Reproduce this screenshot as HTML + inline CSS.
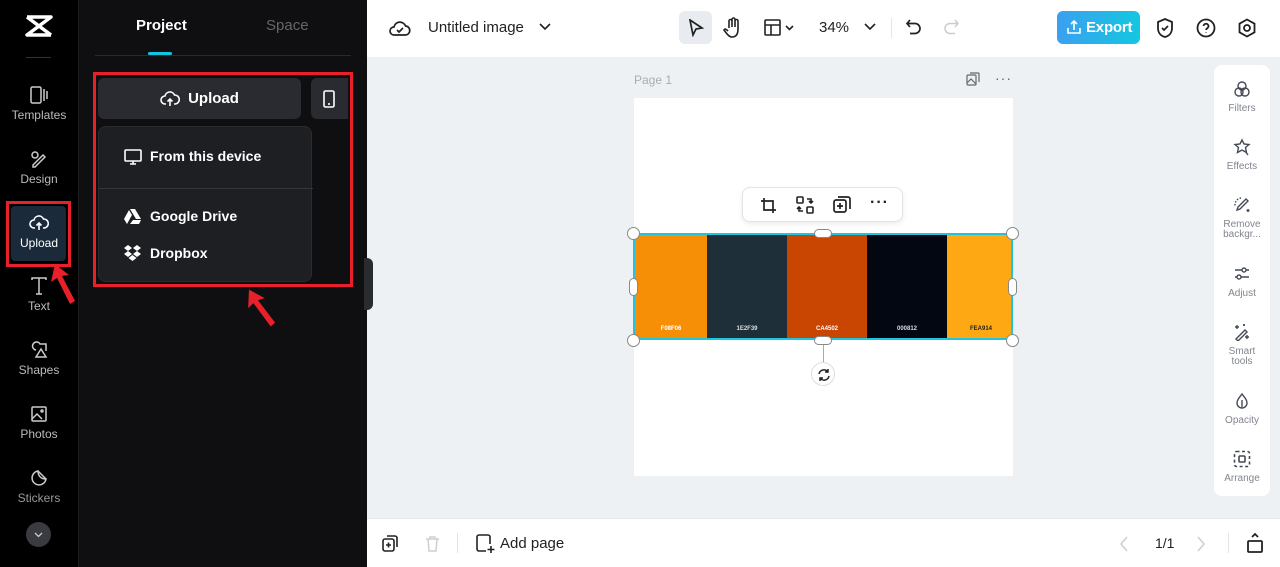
<!DOCTYPE html>
<html><head><meta charset="utf-8"><style>
*{box-sizing:border-box;margin:0;padding:0}
body{width:1280px;height:567px;overflow:hidden;font-family:"Liberation Sans",sans-serif;background:#eef1f4;position:relative}
.abs{position:absolute}
.nav{left:0;top:0;width:78px;height:567px;background:#000}
.nv{position:absolute;left:0;width:78px;text-align:center;color:#bbb;font-size:12px}
.nv svg{display:block;margin:0 auto 3px}
.panel{left:78px;top:0;width:289px;height:567px;background:#0f0f11;border-left:1px solid #1c1c1e}
.top{left:367px;top:0;width:913px;height:57px;background:#fff}
.bot{left:367px;top:518px;width:913px;height:49px;background:#fff;border-top:1px solid #e4e6ea}
.ri{position:absolute;left:0;width:56px;text-align:center;color:#80858f;font-size:10px;line-height:10px}
.ri svg{display:block;margin:0 auto 6px}
.sw{position:absolute;top:0;height:104px;font-size:6px;font-weight:bold;text-align:center;padding-top:91px}
.h{position:absolute;background:#fff;border:1px solid #888;border-radius:50%;width:13px;height:13px}
</style></head><body>
<div class="abs nav">
 <svg class="abs" style="left:24px;top:14px" width="30" height="24" viewBox="0 0 30 24"><path d="M3 3h24L3 21h24M3 3l24 18" stroke="#fff" stroke-width="3.5" fill="none" stroke-linejoin="round"/></svg>
 <div class="abs" style="left:26px;top:57px;width:25px;height:1px;background:#333"></div>
 <div class="nv" style="top:85px"><svg width="20" height="20" viewBox="0 0 20 20" fill="none" stroke="#ccc" stroke-width="1.5"><rect x="2" y="2" width="10" height="16" rx="1.5"/><path d="M15 4v12M18 6v8"/></svg>Templates</div>
 <div class="nv" style="top:149px"><svg width="20" height="20" viewBox="0 0 20 20" fill="none" stroke="#ccc" stroke-width="1.5"><circle cx="6" cy="6" r="3"/><path d="M4 16l10-10 2 2-10 10H4z"/></svg>Design</div>
 <div class="abs" style="left:6px;top:201px;width:65px;height:66px;border:3px solid #e8202a"></div>
 <div class="abs" style="left:11px;top:206px;width:55px;height:55px;background:#1a2a3a;border-radius:4px"></div>
 <div class="nv" style="top:213px;color:#fff"><svg width="20" height="20" viewBox="0 0 20 20" fill="none" stroke="#fff" stroke-width="1.6"><path d="M6 15H5a4 4 0 010-8 5 5 0 019.5-1A4 4 0 0115 15h-1M10 17V10M7.5 12.5L10 10l2.5 2.5"/></svg>Upload</div>
 <div class="nv" style="top:276px"><svg width="20" height="20" viewBox="0 0 20 20" fill="none" stroke="#ccc" stroke-width="1.5"><path d="M3 4V2h14v2M10 2v16M7 18h6"/></svg>Text</div>
 <div class="nv" style="top:340px"><svg width="20" height="20" viewBox="0 0 20 20" fill="none" stroke="#ccc" stroke-width="1.5"><path d="M7 10a4 4 0 114-6h6v7M12 9l5 8H7z"/></svg>Shapes</div>
 <div class="nv" style="top:404px"><svg width="20" height="20" viewBox="0 0 20 20" fill="none" stroke="#ccc" stroke-width="1.5"><rect x="3" y="3" width="14" height="14" rx="1"/><path d="M3 15l5-5 5 5"/><circle cx="13" cy="7" r="1"/></svg>Photos</div>
 <div class="nv" style="top:468px;color:#999"><svg width="20" height="20" viewBox="0 0 20 20" fill="none" stroke="#ccc" stroke-width="1.5"><path d="M17 11a7 7 0 11-8-8c0 5 3 8 8 8zM9 3l8 8"/></svg>Stickers</div>
 <div class="abs" style="left:26px;top:522px;width:25px;height:25px;border-radius:50%;background:#3a3b40"><svg width="25" height="25" viewBox="0 0 25 25"><path d="M9 11l3.5 3.5L16 11" stroke="#ccc" stroke-width="1.3" fill="none"/></svg></div>
 <svg class="abs" style="left:48px;top:262px" width="30" height="46"><path d="M7 2l-4 18 6-4 13 26 5-3-13-25 7-1z" fill="#e8202a"/></svg>
</div>
<div class="abs panel">
 <div class="abs" style="left:57px;top:17px;color:#fff;font-weight:bold;font-size:15px">Project</div>
 <div class="abs" style="left:187px;top:17px;color:#666;font-size:15px">Space</div>
 <div class="abs" style="left:16px;top:55px;width:256px;height:1px;background:#2a2a2d"></div>
 <div class="abs" style="left:69px;top:52px;width:24px;height:3px;background:#11c5e0;border-radius:2px"></div>
 <div class="abs" style="left:14px;top:72px;width:260px;height:215px;border:3px solid #e8202a"></div>
 <div class="abs" style="left:19px;top:78px;width:203px;height:41px;background:#2a2b30;border-radius:6px;color:#fff;font-weight:bold;font-size:15px;text-align:center;line-height:41px"><svg style="vertical-align:-4px;margin-right:8px" width="20" height="18" viewBox="0 0 20 18" fill="none" stroke="#fff" stroke-width="1.6"><path d="M6 15H5a4 4 0 010-8 5 5 0 019.5-1A4 4 0 0115 15h-1M10 17V10M7.5 12.5L10 10l2.5 2.5"/></svg>Upload</div>
 <div class="abs" style="left:232px;top:78px;width:37px;height:41px;background:#2a2b30;border-radius:6px 0 0 6px"><svg style="margin:12px 0 0 12px" width="12" height="18" viewBox="0 0 12 18" fill="none" stroke="#fff" stroke-width="1.6"><rect x="1" y="1" width="10" height="16" rx="1.5"/><path d="M5 14h2"/></svg></div>
 <div class="abs" style="left:19px;top:126px;width:214px;height:156px;background:#1e1f23;border:1px solid #2b2c30;border-radius:8px;color:#fff;font-weight:bold;font-size:14px">
  <div class="abs" style="left:25px;top:21px"><svg style="vertical-align:-4px;margin-right:8px" width="18" height="16" viewBox="0 0 18 16" fill="none" stroke="#fff" stroke-width="1.6"><rect x="1" y="1" width="16" height="11" rx="1"/><path d="M6 15h6M9 12v3"/></svg>From this device</div>
  <div class="abs" style="left:0;top:61px;width:214px;height:1px;background:#35363a"></div>
  <div class="abs" style="left:25px;top:81px"><svg style="vertical-align:-3px;margin-right:9px" width="17" height="15" viewBox="0 0 17 15" fill="#fff"><path d="M6 0h5l6 10h-5zM5 1l3 5-5 9-3-5zM6 15l3-4h8l-2 4z"/></svg>Google Drive</div>
  <div class="abs" style="left:25px;top:118px"><svg style="vertical-align:-3px;margin-right:9px" width="17" height="16" viewBox="0 0 17 16" fill="#fff"><path d="M4 0l4 3-4 3-4-3zM13 0l4 3-4 3-4-3zM4 6l4 3-4 3-4-3zM13 6l4 3-4 3-4-3zM8.5 10l4 3-4 3-4-3z"/></svg>Dropbox</div>
 </div>
 <svg class="abs" style="left:166px;top:286px" width="30" height="46"><path d="M7 2l-4 18 6-4 13 26 5-3-13-25 7-1z" fill="#e8202a" transform="rotate(-10 15 20)"/></svg>
</div>
<div class="abs" style="left:364px;top:258px;width:9px;height:52px;background:#2a2b2f;border-radius:0 6px 6px 0"></div>
<div class="abs top">
 <svg class="abs" style="left:22px;top:18px" width="22" height="20" viewBox="0 0 22 20" fill="none" stroke="#222" stroke-width="1.7"><path d="M6 17H5a4 4 0 010-8 6 6 0 0111.5-1A4.5 4.5 0 0116 17z"/><path d="M8 12l2 2 4-4"/></svg>
 <div class="abs" style="left:61px;top:19px;font-size:15px;color:#222">Untitled image</div>
 <svg class="abs" style="left:172px;top:23px" width="12" height="8"><path d="M1 1l5 5 5-5" stroke="#222" stroke-width="1.6" fill="none"/></svg>
 <div class="abs" style="left:312px;top:11px;width:33px;height:33px;background:#e8ecf1;border-radius:6px"><svg style="margin:8px 0 0 9px" width="16" height="18" viewBox="0 0 16 18" fill="none" stroke="#222" stroke-width="1.7"><path d="M2 1l12 8-6 1-3 6z"/></svg></div>
 <svg class="abs" style="left:356px;top:17px" width="20" height="22" viewBox="0 0 20 22" fill="none" stroke="#222" stroke-width="1.6"><path d="M6 11V4a1.5 1.5 0 013 0v6V2.5a1.5 1.5 0 013 0V10V4a1.5 1.5 0 013 0v8c0 5-2 8-6 8-3 0-5-3-8-7l1-1c1 0 2 1 3 2"/></svg>
 <svg class="abs" style="left:397px;top:19px" width="32" height="18" viewBox="0 0 32 18" fill="none" stroke="#222" stroke-width="1.6"><rect x="1" y="1" width="15" height="15" rx="1"/><path d="M1 6h15M7 6v10M22 7l3.5 3.5L29 7"/></svg>
 <div class="abs" style="left:452px;top:19px;font-size:15px;color:#222">34%</div>
 <svg class="abs" style="left:497px;top:23px" width="12" height="8"><path d="M1 1l5 5 5-5" stroke="#222" stroke-width="1.6" fill="none"/></svg>
 <div class="abs" style="left:524px;top:18px;width:1px;height:20px;background:#e2e4e8"></div>
 <svg class="abs" style="left:538px;top:18px" width="18" height="18" viewBox="0 0 18 18" fill="none" stroke="#222" stroke-width="1.7"><path d="M5 2L2 5.5 5 9M2 5.5h8a5 5 0 010 10H5"/></svg>
 <svg class="abs" style="left:575px;top:18px" width="18" height="18" viewBox="0 0 18 18" fill="none" stroke="#ccc" stroke-width="1.5"><path d="M13 2l3 3.5L13 9M16 5.5H8a5 5 0 000 10h5"/></svg>
 <div class="abs" style="left:690px;top:11px;width:83px;height:33px;border-radius:6px;background:linear-gradient(90deg,#3aa0f0,#14c7e0);color:#fff;font-weight:bold;font-size:15px;line-height:33px;padding-left:29px;letter-spacing:-0.2px">Export</div>
 <svg class="abs" style="left:699px;top:19px" width="16" height="16" viewBox="0 0 16 16" fill="none" stroke="#fff" stroke-width="1.6"><path d="M2 9v5h12V9M8 11V2M5 5l3-3 3 3"/></svg>
 <svg class="abs" style="left:788px;top:17px" width="20" height="22" viewBox="0 0 20 22" fill="none" stroke="#222" stroke-width="1.8"><path d="M10 2l7 3v6c0 5-3 8-7 9-4-1-7-4-7-9V5z"/><path d="M7 11l2 2 4-4"/></svg>
 <svg class="abs" style="left:829px;top:18px" width="20" height="20" viewBox="0 0 20 20" fill="none" stroke="#222" stroke-width="1.8"><circle cx="10" cy="10" r="8.5"/><path d="M7.5 8a2.5 2.5 0 115 .5c0 1.5-2.5 2-2.5 3.5M10 14.5v.5"/></svg>
 <svg class="abs" style="left:870px;top:18px" width="20" height="20" viewBox="0 0 20 20" fill="none" stroke="#222" stroke-width="1.8"><path d="M10 1.5l7.5 4.2v8.6L10 18.5l-7.5-4.2V5.7z"/><circle cx="10" cy="10" r="3"/></svg>
</div>
<div class="abs" style="left:634px;top:73px;font-size:12px;color:#a8adb4">Page 1</div>
<svg class="abs" style="left:966px;top:72px" width="14" height="14" viewBox="0 0 14 14" fill="none" stroke="#666" stroke-width="1.2"><rect x="1" y="3" width="9" height="10" rx="1"/><path d="M4 1h8a1 1 0 011 1v8M1 11l4-4 5 5"/></svg>
<div class="abs" style="left:995px;top:70px;font-size:14px;color:#666;letter-spacing:1px">···</div>
<div class="abs" style="left:634px;top:98px;width:379px;height:378px;background:#fff"></div>
<div class="abs" style="left:742px;top:187px;width:161px;height:35px;background:#fff;border:1px solid #e1e4e8;border-radius:8px;box-shadow:0 2px 6px rgba(0,0,0,.08)">
 <svg class="abs" style="left:17px;top:9px" width="17" height="17" viewBox="0 0 17 17" fill="none" stroke="#222" stroke-width="1.7"><path d="M4 1v12h12M1 4h12v12"/></svg>
 <svg class="abs" style="left:53px;top:8px" width="18" height="18" viewBox="0 0 18 18" fill="none" stroke="#222" stroke-width="1.6"><rect x="1" y="1" width="6" height="6" rx="1"/><rect x="11" y="11" width="6" height="6" rx="1"/><path d="M11 3h4v4M13 5l2 2 2-2M7 15H3v-4M5 13L3 11l-2 2"/></svg>
 <svg class="abs" style="left:90px;top:8px" width="18" height="18" viewBox="0 0 18 18" fill="none" stroke="#222" stroke-width="1.7"><rect x="1" y="4" width="12" height="12" rx="2"/><path d="M5 1h10a2 2 0 012 2v10M7 7v6M4 10h6"/></svg>
 <div class="abs" style="left:127px;top:6px;font-size:16px;font-weight:bold;color:#222;letter-spacing:1px">···</div>
</div>
<div class="abs" style="left:633px;top:233px;width:380px;height:107px;border:2px solid #1fc4de;overflow:hidden">
 <div class="sw" style="left:0;width:72px;background:#f68f06;color:#fff">F08F06</div>
 <div class="sw" style="left:72px;width:80px;background:#1e2f39;color:#ddd">1E2F39</div>
 <div class="sw" style="left:152px;width:80px;background:#c84502;color:#fff">CA4502</div>
 <div class="sw" style="left:232px;width:80px;background:#020712;color:#ddd">000812</div>
 <div class="sw" style="left:312px;width:68px;background:#fea914;color:#222">FEA914</div>
</div>
<div class="h" style="left:627px;top:227px"></div><div class="h" style="left:1006px;top:227px"></div>
<div class="h" style="left:627px;top:334px"></div><div class="h" style="left:1006px;top:334px"></div>
<div class="abs" style="left:814px;top:229px;width:18px;height:9px;background:#fff;border:1px solid #888;border-radius:5px"></div>
<div class="abs" style="left:814px;top:336px;width:18px;height:9px;background:#fff;border:1px solid #888;border-radius:5px"></div>
<div class="abs" style="left:629px;top:278px;width:9px;height:18px;background:#fff;border:1px solid #888;border-radius:5px"></div>
<div class="abs" style="left:1008px;top:278px;width:9px;height:18px;background:#fff;border:1px solid #888;border-radius:5px"></div>
<div class="abs" style="left:823px;top:345px;width:1px;height:17px;background:#aaa"></div>
<div class="abs" style="left:811px;top:362px;width:24px;height:24px;border-radius:50%;background:#fff;border:1px solid #ddd"><svg style="margin:5px 0 0 5px" width="14" height="14" viewBox="0 0 14 14" fill="none" stroke="#222" stroke-width="1.5"><path d="M2 6a5 5 0 019-2M12 8a5 5 0 01-9 2M11 1v3H8M3 13v-3h3"/></svg></div>
<div class="abs" style="left:1214px;top:65px;width:56px;height:431px;background:#fff;border-radius:8px">
 <div class="ri" style="top:15px"><svg width="18" height="18" viewBox="0 0 18 18" fill="none" stroke="#444a55" stroke-width="1.4"><circle cx="9" cy="6" r="4"/><circle cx="6" cy="12" r="4"/><circle cx="12" cy="12" r="4"/></svg>Filters</div>
 <div class="ri" style="top:73px"><svg width="18" height="18" viewBox="0 0 18 18" fill="none" stroke="#444a55" stroke-width="1.4"><path d="M9 2l2 4 5 .5-3.5 3 1 5L9 12l-4.5 2.5 1-5L2 6.5 7 6zM12 13l3 4"/></svg>Effects</div>
 <div class="ri" style="top:131px"><svg width="18" height="18" viewBox="0 0 18 18" fill="none" stroke="#444a55" stroke-width="1.4"><path d="M8 2a7 7 0 00-6 8" stroke-dasharray="1.5 1.5"/><path d="M13 3l2 2-8 8-3 1 1-3zM15 13v3M13.5 14.5h3"/></svg>Remove<br>backgr...</div>
 <div class="ri" style="top:200px"><svg width="18" height="18" viewBox="0 0 18 18" fill="none" stroke="#444a55" stroke-width="1.4"><path d="M2 5h14M2 12h14"/><circle cx="11" cy="5" r="2" fill="#fff"/><circle cx="6" cy="12" r="2" fill="#fff"/></svg>Adjust</div>
 <div class="ri" style="top:258px"><svg width="18" height="18" viewBox="0 0 18 18" fill="none" stroke="#444a55" stroke-width="1.4"><path d="M3 16L12 7l2 2-9 9zM4 2v4M2 4h4M14 12v4M12 14h4M11 1v2M10 2h2"/></svg>Smart<br>tools</div>
 <div class="ri" style="top:327px"><svg width="18" height="18" viewBox="0 0 18 18" fill="none" stroke="#444a55" stroke-width="1.4"><path d="M9 2c3 4 5 6 5 9a5 5 0 01-10 0c0-3 2-5 5-9zM9 8v7"/></svg>Opacity</div>
 <div class="ri" style="top:385px"><svg width="18" height="18" viewBox="0 0 18 18" fill="none" stroke="#444a55" stroke-width="1.6"><rect x="1.5" y="1.5" width="15" height="15" rx="2" stroke-dasharray="3 2.5"/><rect x="6" y="6" width="6" height="6" rx="1"/></svg>Arrange</div>
</div>
<div class="abs bot">
 <svg class="abs" style="left:15px;top:16px" width="17" height="17" viewBox="0 0 17 17" fill="none" stroke="#222" stroke-width="1.6"><rect x="1" y="4" width="11" height="12" rx="2"/><path d="M5 1h8a2 2 0 012 2v9M6.5 7.5v5M4 10h5"/></svg>
 <svg class="abs" style="left:58px;top:16px" width="15" height="17" viewBox="0 0 15 17" fill="none" stroke="#ccd0d6" stroke-width="1.5"><path d="M1 4h13M5 4V2h5v2M3 4l1 12h7l1-12"/></svg>
 <div class="abs" style="left:90px;top:14px;width:1px;height:20px;background:#e2e4e8"></div>
 <svg class="abs" style="left:109px;top:15px" width="19" height="20" viewBox="0 0 19 20" fill="none" stroke="#222" stroke-width="1.6"><path d="M10 17H3a2 2 0 01-2-2V3a2 2 0 012-2h9a2 2 0 012 2v7M15 12v7M11.5 15.5h7"/></svg>
 <div class="abs" style="left:133px;top:16px;font-size:15px;color:#222">Add page</div>
 <svg class="abs" style="left:752px;top:17px" width="10" height="16"><path d="M8 1L2 8l6 7" stroke="#ccc" stroke-width="1.4" fill="none"/></svg>
 <div class="abs" style="left:788px;top:16px;font-size:14px;color:#222">1/1</div>
 <svg class="abs" style="left:829px;top:17px" width="10" height="16"><path d="M2 1l6 7-6 7" stroke="#ccc" stroke-width="1.4" fill="none"/></svg>
 <div class="abs" style="left:861px;top:14px;width:1px;height:20px;background:#e2e4e8"></div>
 <svg class="abs" style="left:879px;top:13px" width="18" height="22" viewBox="0 0 18 22" fill="none" stroke="#222" stroke-width="1.8"><rect x="2" y="9" width="14" height="11" rx="1"/><path d="M6 5l3-3 3 3"/></svg>
</div>
</body></html>
